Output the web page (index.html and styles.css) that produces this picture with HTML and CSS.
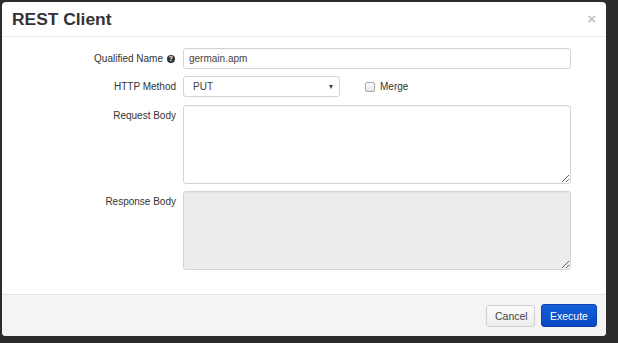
FILE: index.html
```html
<!DOCTYPE html>
<html>
<head>
<meta charset="utf-8">
<link rel="stylesheet" href="styles.css">
</head>
<body>
<div class="modal">
  <div class="modal-header">
    <h4 class="title">REST Client</h4>
    <span class="close">×</span>
  </div>
  <div class="modal-body">
    <div class="row row-input">
      <label class="label">Qualified Name <span class="help">?</span></label>
      <input class="control" type="text" value="germain.apm">
    </div>
    <div class="row row-input">
      <label class="label">HTTP Method</label>
      <div class="select"><span>PUT</span><span class="caret"></span></div>
      <label class="check"><span class="box"></span>Merge</label>
    </div>
    <div class="row row-area">
      <label class="label label-top">Request Body</label>
      <textarea class="control area"></textarea>
    </div>
    <div class="row">
      <label class="label label-top">Response Body</label>
      <textarea class="control area disabled" disabled></textarea>
    </div>
  </div>
  <div class="modal-footer">
    <button class="btn btn-default">Cancel</button>
    <button class="btn btn-primary">Execute</button>
  </div>
</div>
</body>
</html>
```
FILE: styles.css
```css
html, body {
  margin: 0;
  padding: 0;
  height: 100%;
}
body {
  background: #2c2c2c;
  font-family: "Liberation Sans", Arial, sans-serif;
  font-size: 10px;
  color: #333;
  overflow: hidden;
}
.modal {
  margin: 2px 0 0 2px;
  width: 604px;
  height: 334px;
  background: #fff;
  border-radius: 4px;
  display: flex;
  flex-direction: column;
  overflow: hidden;
  box-sizing: border-box;
}
.modal-header {
  height: 34px;
  border-bottom: 1px solid #ececec;
  display: flex;
  align-items: center;
  justify-content: space-between;
  padding: 0 10px 0 10px;
  flex: none;
}
.title {
  margin: 0;
  font-size: 17.4px;
  font-weight: bold;
  color: #333;
  padding-top: 1px;
}
.close {
  color: #c4c4c4;
  font-size: 15px;
  font-weight: bold;
  padding-bottom: 1px;
}
.modal-body {
  flex: 1;
  padding: 11px 35px 0 0;
  display: flex;
  flex-direction: column;
  gap: 7px;
}
.row {
  display: flex;
  align-items: flex-start;
  line-height: 12px;
}
.row-input {
  align-items: center;
  height: 21px;
}
.row-area {
  margin-top: 1px;
}
.label {
  width: 174px;
  margin-right: 7px;
  text-align: right;
  flex: none;
  color: #333;
  display: flex;
  justify-content: flex-end;
  align-items: center;
  gap: 4px;
}
.label-top {
  padding-top: 5px;
}
.help {
  display: inline-flex;
  width: 8px;
  height: 8px;
  border-radius: 50%;
  background: #333;
  color: #fff;
  font-size: 7px;
  font-weight: bold;
  align-items: center;
  justify-content: center;
  line-height: 1;
  margin-right: 1px;
}
.control {
  box-sizing: border-box;
  width: 388px;
  height: 21px;
  border: 1px solid #d4d4d4;
  border-radius: 3px;
  padding: 0 5px;
  font-family: "Liberation Sans", Arial, sans-serif;
  font-size: 10px;
  color: #444;
  background: #fff;
  margin: 0;
  box-shadow: inset 0 1px 1px rgba(0,0,0,0.04);
}
.area {
  height: 79px;
  resize: vertical;
}
.disabled {
  background: #ececec;
}
.select {
  box-sizing: border-box;
  width: 157px;
  height: 21px;
  border: 1px solid #d4d4d4;
  border-radius: 3px;
  display: flex;
  align-items: center;
  justify-content: space-between;
  padding: 0 6px 0 9px;
  font-size: 10px;
  color: #444;
}
.caret {
  width: 0;
  height: 0;
  border-left: 2.5px solid transparent;
  border-right: 2.5px solid transparent;
  border-top: 4px solid #444;
}
.check {
  display: flex;
  align-items: center;
  margin-left: 25px;
  gap: 5px;
  font-size: 10px;
  color: #333;
}
.box {
  width: 8px;
  height: 8px;
  border: 1px solid #aaa;
  border-radius: 2px;
  background: linear-gradient(#fafafa, #e6e6e6);
}
.modal-footer {
  flex: none;
  height: 41px;
  background: #f4f4f4;
  border-top: 1px solid #e6e6e6;
  display: flex;
  align-items: center;
  justify-content: flex-end;
  padding: 0 9px 0 0;
  gap: 6px;
}
.btn {
  font-family: "Liberation Sans", Arial, sans-serif;
  font-size: 10.5px;
  height: 22px;
  border-radius: 3px;
  padding: 0 8px;
  margin: 0;
  cursor: pointer;
}
.btn-default {
  width: 49px;
  background: linear-gradient(#fcfcfc, #ececec);
  border: 1px solid #d0d0d0;
  color: #444;
}
.btn-primary {
  width: 56px;
  height: 23px;
  background: linear-gradient(#1560d6, #0848c2);
  border: 1px solid #0a42b0;
  color: #fff;
}
```
